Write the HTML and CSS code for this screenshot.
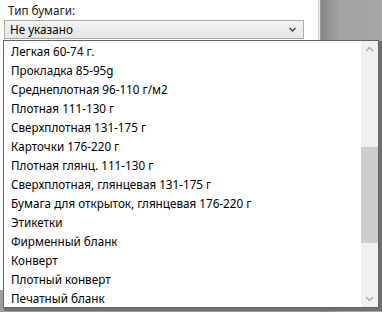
FILE: index.html
```html
<!DOCTYPE html>
<html lang="ru">
<head>
  <meta charset="UTF-8" />
  <title>Тип бумаги</title>
  <link rel="stylesheet" href="styles.css">
</head>
<body>
  <div class="screen">
    <div class="dialog">
      <div class="field-label">Тип бумаги:</div>
      <div class="combo">
        <span class="combo-value">Не указано</span>
        <svg class="combo-arrow" width="9" height="6" viewBox="0 0 9 6"><path d="M1.5 1 L4.5 4 L7.5 1" fill="none" stroke="#444" stroke-width="1.4"/></svg>
      </div>
    </div>
    <div class="side"></div>
  </div>

  <div class="dropdown">
    <ul class="options">
      <li>Легкая 60-74 г.</li>
      <li>Прокладка 85-95g</li>
      <li>Среднеплотная 96-110 г/м2</li>
      <li>Плотная 111-130 г</li>
      <li>Сверхплотная 131-175 г</li>
      <li>Карточки 176-220 г</li>
      <li>Плотная глянц. 111-130 г</li>
      <li>Сверхплотная, глянцевая 131-175 г</li>
      <li>Бумага для открыток, глянцевая 176-220 г</li>
      <li>Этикетки</li>
      <li>Фирменный бланк</li>
      <li>Конверт</li>
      <li>Плотный конверт</li>
      <li>Печатный бланк</li>
    </ul>
    <div class="scrollbar">
      <svg class="scroll-btn" width="17" height="17" viewBox="0 0 17 17"><path d="M5 10 L8.5 6.5 L12 10" fill="none" stroke="#a3a3a3" stroke-width="1.2"/></svg>
      <div class="track">
        <div class="thumb"></div>
      </div>
      <svg class="scroll-btn" width="17" height="17" viewBox="0 0 17 17"><path d="M5 7 L8.5 10.5 L12 7" fill="none" stroke="#a3a3a3" stroke-width="1.2"/></svg>
    </div>
  </div>
</body>
</html>
```

FILE: styles.css
```css
body {
  margin: 0;
  font-family: 'Noto Sans', 'Open Sans', sans-serif;
  font-size: 11.7px;
  color: #000;
  background: #9c9c9c;
  overflow: hidden;
}
.screen {
  display: flex;
  width: 382px;
  height: 312px;
}
.dialog {
  width: 318px;
  height: 290px;
  background: #fff;
  border-right: 1px solid #cfcfcf;
  box-shadow: 1px 0 0 #ececec;
}
.field-label {
  padding: 2px 0 0 8px;
  height: 18px;
  line-height: 16px;
  color: #222;
}
.combo {
  margin-left: 4px;
  width: 287px;
  height: 17px;
  border: 1px solid #acacac;
  background: linear-gradient(#f2f2f2, #e6e6e6);
  display: flex;
  align-items: center;
  justify-content: space-between;
  padding: 0 6px 0 5px;
}
.combo-value {
  line-height: 17px;
}
.combo-arrow {
  display: block;
}
.side {
  flex: 1;
  margin-left: 2px;
  background: linear-gradient(90deg, #878787, #a3a3a3 30%, #a6a6a6);
}
.dropdown {
  position: absolute;
  left: 3px;
  top: 40px;
  width: 374px;
  height: 266px;
  border: 1px solid #646464;
  background: #fff;
  display: flex;
  box-shadow: 2px 2px 0 1px #707070;
}
.options {
  list-style: none;
  margin: 0;
  padding: 1px 0 0;
  flex: 1;
  overflow: hidden;
}
.options li {
  height: 19px;
  line-height: 19px;
  padding-left: 7px;
  white-space: nowrap;
}
.scrollbar {
  width: 17px;
  display: flex;
  flex-direction: column;
  background: #f0f0f0;
}
.scroll-btn {
  display: block;
  flex: none;
}
.track {
  flex: 1;
  padding-top: 89px;
}
.thumb {
  height: 96px;
  background: #cdcdcd;
}
```
